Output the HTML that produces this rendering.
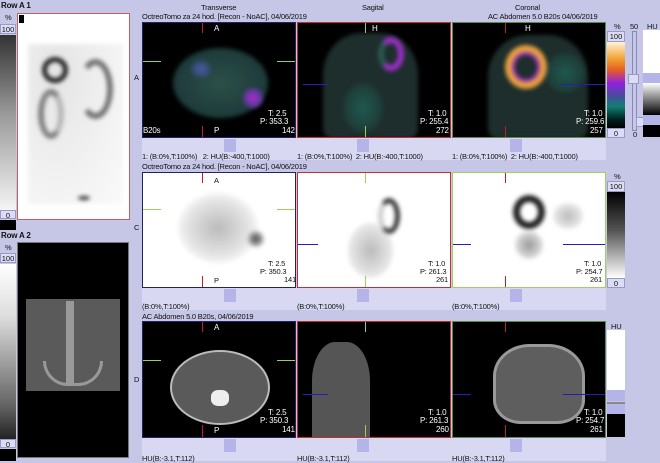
<!DOCTYPE html>
<html><head><style>
*{margin:0;padding:0;box-sizing:border-box}
body{width:660px;height:461px;overflow:hidden;background:#c6c6e6;font-family:"Liberation Sans",sans-serif;position:relative;font-size:8px;color:#111}
.a{position:absolute}
.b{filter:blur(2px)}
.t{position:absolute;font-size:7.5px;white-space:nowrap;color:#111;letter-spacing:-0.2px}
.w{color:#fff;font-size:8px}
.box{position:absolute;background:#dcdcf4;border:1px solid #9a9ac8;font-size:7.5px;text-align:center;line-height:9px}
.strip{position:absolute;background:#d8d8f2}
.thumb{position:absolute;background:#b4b4e8;width:12px;height:13px}
.vr{position:absolute;width:1px;background:#c02020}
.vg{position:absolute;width:1px;background:#9ad060}
.hg{position:absolute;height:1px;background:#9ad060}
.hb{position:absolute;height:1px;background:#2020c0}
</style></head><body>
<div class="t" style="left:1px;top:1px;font-weight:bold;font-size:8px">Row A 1</div>
<div class="t" style="left:5px;top:13px">%</div>
<div class="box" style="left:0;top:24px;width:16px;height:10px">100</div>
<div class="a" style="left:0;top:35px;width:16px;height:175px;background:linear-gradient(#333,#999 45%,#f4f4f4)"></div>
<div class="box" style="left:0;top:210px;width:16px;height:9px">0</div>
<div class="a" style="left:0;top:220px;width:16px;height:10px;background:#000"></div>
<div class="a" style="left:17px;top:13px;width:113px;height:207px;background:#fff;border:1px solid #c06060;overflow:hidden">
 <div class="a" style="left:1px;top:1px;width:5px;height:8px;background:#000"></div>
 <div class="a b" style="left:10px;top:30px;width:95px;height:160px;background:radial-gradient(ellipse at 30% 20%,#e4e4e4,#f2f2f2 60%,#fafafa)"></div>
 <div class="a b" style="left:24px;top:43px;width:26px;height:26px;border-radius:50%;border:5px solid #222"></div>
 <div class="a b" style="left:60px;top:45px;width:35px;height:60px;border-radius:50%;border:6px solid #555;border-left-color:transparent;opacity:.8"></div>
 <div class="a b" style="left:20px;top:75px;width:26px;height:50px;border-radius:50%;border:6px solid #666;border-right-color:#aaa;opacity:.8"></div>
 <div class="a b" style="left:60px;top:182px;width:12px;height:4px;background:#333;border-radius:50%"></div>
</div>
<div class="t" style="left:1px;top:231px;font-weight:bold;font-size:8px">Row A 2</div>
<div class="t" style="left:5px;top:243px">%</div>
<div class="box" style="left:0;top:253px;width:16px;height:10px">100</div>
<div class="a" style="left:0;top:264px;width:16px;height:175px;background:linear-gradient(#fff,#ddd 30%,#666 80%,#222)"></div>
<div class="box" style="left:0;top:439px;width:16px;height:9px">0</div>
<div class="a" style="left:0;top:449px;width:16px;height:12px;background:#000"></div>
<div class="a" style="left:17px;top:242px;width:112px;height:216px;background:#000;border:1px solid #777">
 <div class="a" style="left:8px;top:56px;width:94px;height:92px;background:#5a5a5a"></div>
 <div class="a" style="left:48px;top:58px;width:8px;height:85px;background:#999"></div>
 <div class="a" style="left:25px;top:118px;width:60px;height:25px;border:3px solid #999;border-top:none;border-radius:0 0 30px 30px"></div>
</div>
<div class="t" style="left:201px;top:3px">Transverse</div>
<div class="t" style="left:362px;top:3px">Sagital</div>
<div class="t" style="left:515px;top:3px">Coronal</div>
<div class="t" style="left:142px;top:12px">OctreoTomo za 24 hod. [Recon - NoAC], 04/06/2019</div>
<div class="t" style="left:488px;top:12px">AC Abdomen 5.0 B20s 04/06/2019</div>
<div class="strip" style="left:142px;top:138px;width:464px;height:22px"></div>
<div class="strip" style="left:142px;top:288px;width:464px;height:22px"></div>
<div class="strip" style="left:142px;top:438px;width:464px;height:23px"></div>
<div class="thumb" style="left:224px;top:139px"></div><div class="thumb" style="left:357px;top:139px"></div><div class="thumb" style="left:510px;top:139px"></div>
<div class="thumb" style="left:224px;top:289px"></div><div class="thumb" style="left:357px;top:289px"></div><div class="thumb" style="left:510px;top:289px"></div>
<div class="thumb" style="left:224px;top:439px"></div><div class="thumb" style="left:357px;top:439px"></div><div class="thumb" style="left:510px;top:439px"></div>
<div class="t" style="left:142px;top:152px">1: (B:0%,T:100%)&nbsp;&nbsp;&nbsp;2: HU(B:-400,T:1000)</div>
<div class="t" style="left:297px;top:152px">1: (B:0%,T:100%)&nbsp;&nbsp;2: HU(B:-400,T:1000)</div>
<div class="t" style="left:452px;top:152px">1: (B:0%,T:100%)&nbsp;&nbsp;2: HU(B:-400,T:1000)</div>
<div class="t" style="left:142px;top:162px">OctreoTomo za 24 hod. [Recon - NoAC], 04/06/2019</div>
<div class="t" style="left:142px;top:302px">(B:0%,T:100%)</div>
<div class="t" style="left:297px;top:302px">(B:0%,T:100%)</div>
<div class="t" style="left:452px;top:302px">(B:0%,T:100%)</div>
<div class="t" style="left:142px;top:312px">AC Abdomen 5.0 B20s, 04/06/2019</div>
<div class="t" style="left:142px;top:454px">HU(B:-3.1,T:112)</div>
<div class="t" style="left:297px;top:454px">HU(B:-3.1,T:112)</div>
<div class="t" style="left:452px;top:454px">HU(B:-3.1,T:112)</div>
<div class="t" style="left:134px;top:73px">A</div><div class="t" style="left:134px;top:223px">C</div><div class="t" style="left:134px;top:375px">D</div>
<!-- row 1 -->
<div class="a" style="left:142px;top:22px;width:154px;height:116px;background:#000;border:1px solid #22226a;overflow:hidden">
 <div class="a b" style="left:30px;top:25px;width:95px;height:70px;border-radius:50%;background:radial-gradient(ellipse,#2c5048,#1d3a3a 70%,#333 100%)"></div>
 <div class="a b" style="left:100px;top:65px;width:20px;height:20px;border-radius:50%;background:radial-gradient(#b02ad0,#5a3a9a 60%,transparent)"></div>
 <div class="a b" style="left:48px;top:37px;width:20px;height:18px;border-radius:50%;background:radial-gradient(#4a5aaa,transparent)"></div>
 <div class="vr" style="left:59px;top:0;height:10px"></div><div class="vr" style="left:59px;top:103px;height:13px"></div>
 <div class="hg" style="left:0;top:38px;width:18px"></div><div class="hg" style="left:134px;top:38px;width:20px"></div>
</div>
<div class="a" style="left:297px;top:22px;width:154px;height:116px;background:#000;border:1px solid #c03030;overflow:hidden">
 <div class="a b" style="left:25px;top:10px;width:95px;height:106px;border-radius:40% 40% 10% 10%;background:#1e2e2c"></div>
 <div class="a b" style="left:45px;top:60px;width:40px;height:50px;border-radius:50%;background:radial-gradient(#1e5a50,transparent)"></div>
 <div class="a b" style="left:80px;top:14px;width:26px;height:34px;border-radius:50%;border:6px solid #9a30c8;border-left-color:#2a5a50"></div>
 <div class="vg" style="left:67px;top:0;height:10px"></div><div class="vg" style="left:67px;top:103px;height:13px"></div>
 <div class="hb" style="left:5px;top:61px;width:25px"></div>
</div>
<div class="a" style="left:452px;top:22px;width:154px;height:116px;background:#000;border:1px solid #5a8a4a;overflow:hidden">
 <div class="a b" style="left:35px;top:12px;width:100px;height:104px;border-radius:40% 40% 10% 10%;background:#1e2e2c"></div>
 <div class="a b" style="left:92px;top:30px;width:40px;height:40px;border-radius:50%;background:radial-gradient(#1e5a50,transparent)"></div>
 <div class="a b" style="left:52px;top:22px;width:42px;height:44px;border-radius:50%;border:7px solid #e8a040;box-shadow:0 0 0 3px #9a30c8 inset"></div>
 <div class="vr" style="left:52px;top:0;height:10px"></div><div class="vr" style="left:52px;top:103px;height:13px"></div>
 <div class="hb" style="left:108px;top:61px;width:46px"></div>
</div>
<div class="t w" style="left:143px;top:126px">B20s</div><div class="t w" style="left:282px;top:126px">142</div>
<div class="t w" style="left:268px;top:109px">T: 2.5</div><div class="t w" style="left:260px;top:117px">P: 353.3</div>
<div class="t w" style="left:428px;top:109px">T: 1.0</div><div class="t w" style="left:420px;top:117px">P: 255.4</div><div class="t w" style="left:436px;top:126px">272</div>
<div class="t w" style="left:584px;top:109px">T: 1.0</div><div class="t w" style="left:576px;top:117px">P: 259.6</div><div class="t w" style="left:590px;top:126px">257</div>
<div class="t w" style="left:214px;top:24px">A</div><div class="t w" style="left:214px;top:126px">P</div>
<div class="t w" style="left:372px;top:24px">H</div><div class="t w" style="left:525px;top:24px">H</div>
<div class="t" style="left:614px;top:22px">%</div>
<div class="box" style="left:607px;top:31px;width:18px;height:11px">100</div>
<div class="a" style="left:607px;top:42px;width:18px;height:86px;background:linear-gradient(#fff3d8,#f0a030 20%,#e86020 32%,#9020e0 48%,#4a4aa0 62%,#108070 75%,#002020 90%,#000)"></div>
<div class="box" style="left:607px;top:128px;width:18px;height:10px">0</div>
<div class="t" style="left:630px;top:22px">50</div>
<div class="a" style="left:632px;top:31px;width:5px;height:100px;border:1px solid #8888b8"></div>
<div class="box" style="left:628px;top:74px;width:11px;height:10px"></div>
<div class="box" style="left:636px;top:117px;width:11px;height:10px"></div>
<div class="t" style="left:633px;top:130px">0</div>
<div class="t" style="left:647px;top:22px">HU</div>
<div class="a" style="left:643px;top:30px;width:17px;height:43px;background:#fff"></div>
<div class="a" style="left:643px;top:73px;width:17px;height:10px;background:#b4b4e8"></div>
<div class="a" style="left:643px;top:83px;width:17px;height:32px;background:linear-gradient(#fff,#000)"></div>
<div class="a" style="left:643px;top:115px;width:17px;height:10px;background:#b4b4e8"></div>
<div class="a" style="left:643px;top:125px;width:17px;height:12px;background:#000"></div>
<!-- row 2 -->
<div class="a" style="left:142px;top:172px;width:154px;height:116px;background:#fff;border:1px solid #22226a;overflow:hidden">
 <div class="a b" style="left:35px;top:20px;width:80px;height:70px;border-radius:50%;background:radial-gradient(#bbb,#e4e4e4 55%,#fff 80%)"></div>
 <div class="a b" style="left:105px;top:58px;width:16px;height:16px;border-radius:50%;background:radial-gradient(#444,transparent)"></div>
 <div class="vr" style="left:59px;top:0;height:10px"></div><div class="vr" style="left:59px;top:103px;height:13px"></div>
 <div class="hg" style="left:0;top:36px;width:18px"></div><div class="hg" style="left:134px;top:36px;width:20px"></div>
</div>
<div class="a" style="left:297px;top:172px;width:154px;height:116px;background:#fff;border:1px solid #c03030;overflow:hidden">
 <div class="a b" style="left:80px;top:25px;width:22px;height:36px;border-radius:50%;border:5px solid #333;border-left-color:#ccc"></div>
 <div class="a b" style="left:50px;top:50px;width:45px;height:55px;border-radius:50%;background:radial-gradient(#bbb,transparent)"></div>
 <div class="vg" style="left:67px;top:0;height:10px"></div><div class="vg" style="left:67px;top:103px;height:13px"></div>
 <div class="hb" style="left:0;top:71px;width:20px"></div>
</div>
<div class="a" style="left:452px;top:172px;width:154px;height:116px;background:#fff;border:1px solid #a0d060;overflow:hidden">
 <div class="a b" style="left:60px;top:22px;width:32px;height:34px;border-radius:50%;border:7px solid #222"></div>
 <div class="a b" style="left:100px;top:30px;width:30px;height:26px;border-radius:50%;background:radial-gradient(#bbb,transparent)"></div>
 <div class="a b" style="left:62px;top:58px;width:28px;height:28px;border-radius:50%;background:radial-gradient(#999,transparent)"></div>
 <div class="vr" style="left:52px;top:0;height:10px"></div><div class="vr" style="left:52px;top:103px;height:13px"></div>
 <div class="hb" style="left:0;top:71px;width:18px"></div><div class="hb" style="left:110px;top:71px;width:44px"></div>
</div>
<div class="t" style="left:268px;top:259px">T: 2.5</div><div class="t" style="left:260px;top:267px">P: 350.3</div><div class="t" style="left:284px;top:275px">141</div>
<div class="t" style="left:428px;top:259px">T: 1.0</div><div class="t" style="left:420px;top:267px">P: 261.3</div><div class="t" style="left:436px;top:275px">261</div>
<div class="t" style="left:584px;top:259px">T: 1.0</div><div class="t" style="left:576px;top:267px">P: 254.7</div><div class="t" style="left:590px;top:275px">261</div>
<div class="t" style="left:214px;top:176px">A</div><div class="t" style="left:214px;top:276px">P</div>
<div class="t" style="left:614px;top:172px">%</div>
<div class="box" style="left:607px;top:181px;width:18px;height:11px">100</div>
<div class="a" style="left:607px;top:192px;width:18px;height:86px;background:linear-gradient(#000,#555 45%,#fff)"></div>
<div class="box" style="left:607px;top:278px;width:18px;height:10px">0</div>
<!-- row 3 -->
<div class="a" style="left:142px;top:321px;width:154px;height:117px;background:#000;border:1px solid #22226a;overflow:hidden">
 <div class="a" style="left:27px;top:28px;width:100px;height:75px;border-radius:50%;background:#5a5a5a;border:2px solid #bbb"></div>
 <div class="a" style="left:68px;top:68px;width:18px;height:16px;background:#eee;border-radius:40%"></div>
 <div class="vr" style="left:59px;top:0;height:10px"></div><div class="vr" style="left:59px;top:103px;height:14px"></div>
 <div class="hg" style="left:0;top:38px;width:18px"></div><div class="hg" style="left:134px;top:38px;width:20px"></div>
</div>
<div class="a" style="left:297px;top:321px;width:154px;height:117px;background:#000;border:1px solid #c03030;overflow:hidden">
 <div class="a" style="left:14px;top:20px;width:58px;height:97px;background:#555;border-radius:40% 40% 0 0"></div>
 <div class="vg" style="left:67px;top:0;height:10px"></div><div class="vg" style="left:67px;top:103px;height:14px"></div>
 <div class="hb" style="left:5px;top:72px;width:25px"></div>
</div>
<div class="a" style="left:452px;top:321px;width:154px;height:117px;background:#000;border:1px solid #5a8a4a;overflow:hidden">
 <div class="a" style="left:40px;top:22px;width:92px;height:80px;background:#5e5e5e;border-radius:40% 40% 30% 30%;border:3px solid #999"></div>
 <div class="vr" style="left:52px;top:0;height:10px"></div><div class="vr" style="left:52px;top:103px;height:14px"></div>
 <div class="hb" style="left:0;top:72px;width:18px"></div><div class="hb" style="left:110px;top:72px;width:44px"></div>
</div>
<div class="t w" style="left:268px;top:408px">T: 2.5</div><div class="t w" style="left:260px;top:416px">P: 350.3</div><div class="t w" style="left:282px;top:425px">141</div>
<div class="t w" style="left:428px;top:408px">T: 1.0</div><div class="t w" style="left:420px;top:416px">P: 261.3</div><div class="t w" style="left:436px;top:425px">260</div>
<div class="t w" style="left:584px;top:408px">T: 1.0</div><div class="t w" style="left:576px;top:416px">P: 254.7</div><div class="t w" style="left:590px;top:425px">261</div>
<div class="t w" style="left:214px;top:323px">A</div><div class="t w" style="left:214px;top:426px">P</div>
<div class="t" style="left:611px;top:322px">HU</div>
<div class="a" style="left:607px;top:330px;width:18px;height:60px;background:#fff"></div>
<div class="a" style="left:607px;top:390px;width:18px;height:11px;background:#b4b4e8"></div>
<div class="a" style="left:607px;top:402px;width:18px;height:2px;background:#888"></div>
<div class="a" style="left:607px;top:404px;width:18px;height:10px;background:#b4b4e8"></div>
<div class="a" style="left:607px;top:414px;width:18px;height:23px;background:#000"></div>
</body></html>
